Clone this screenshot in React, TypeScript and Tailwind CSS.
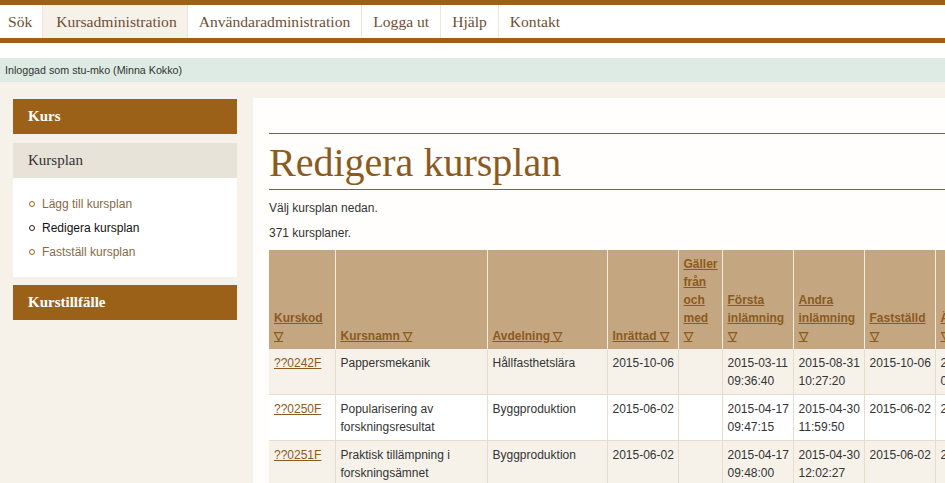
import React from "react";

const navItems = [
  { label: "Sök", active: false },
  { label: "Kursadministration", active: true },
  { label: "Användaradministration", active: false },
  { label: "Logga ut", active: false },
  { label: "Hjälp", active: false },
  { label: "Kontakt", active: false },
];

const columns = [
  { lines: ["Kurskod", "▽"], width: "w-[66px]" },
  { lines: ["Kursnamn ▽"], width: "w-[152px]" },
  { lines: ["Avdelning ▽"], width: "w-[120px]" },
  { lines: ["Inrättad ▽"], width: "w-[71px]" },
  { lines: ["Gäller", "från", "och", "med", "▽"], width: "w-[44px]" },
  { lines: ["Första", "inlämning", "▽"], width: "w-[71px]" },
  { lines: ["Andra", "inlämning", "▽"], width: "w-[71px]" },
  { lines: ["Fastställd", "▽"], width: "w-[71px]" },
  { lines: ["Ändrad", "▽"], width: "w-[80px]" },
];

const rows = [
  {
    code: "??0242F",
    name: ["Pappersmekanik"],
    dept: "Hållfasthetslära",
    created: "2015-10-06",
    valid: "",
    first: ["2015-03-11", "09:36:40"],
    second: ["2015-08-31", "10:27:20"],
    fixed: "2015-10-06",
    changed: ["2015-10-06", "09:51:02"],
  },
  {
    code: "??0250F",
    name: ["Popularisering av", "forskningsresultat"],
    dept: "Byggproduktion",
    created: "2015-06-02",
    valid: "",
    first: ["2015-04-17", "09:47:15"],
    second: ["2015-04-30", "11:59:50"],
    fixed: "2015-06-02",
    changed: ["2015-06-02"],
  },
  {
    code: "??0251F",
    name: ["Praktisk tillämpning i", "forskningsämnet"],
    dept: "Byggproduktion",
    created: "2015-06-02",
    valid: "",
    first: ["2015-04-17", "09:48:00"],
    second: ["2015-04-30", "12:02:27"],
    fixed: "2015-06-02",
    changed: ["2015-06-02"],
  },
];

const Lines = ({ lines }: { lines: string[] }) => (
  <>
    {lines.map((l, i) => (
      <div key={i}>{l}</div>
    ))}
  </>
);

const App = () => {
  const cell =
    "align-top whitespace-nowrap px-[5px] pt-[5px] pb-[4px] border-l border-b border-[#e6ddcd] text-[12px] leading-[18px] text-[#333]";

  return (
    <div className="min-h-screen bg-[#f6f2ea] font-['Liberation_Sans',Arial,sans-serif]">
      {/* top navigation */}
      <div className="bg-white border-t-[5px] border-b-[5px] border-[#9c6118]">
        <ul className="flex h-[33px] font-['Liberation_Serif',Georgia,serif] text-[15.6px] text-[#6e4f33]">
          {navItems.map((item, i) => (
            <li
              key={item.label}
              className={
                "flex items-center " +
                (i > 0 ? "border-l border-[#ece6dc] px-[11px] " : "pl-[8px] pr-[10px] ") +
                (item.active ? "bg-[#f6f2ea] pl-[13px] pr-[10px]" : "")
              }
            >
              {item.label}
            </li>
          ))}
        </ul>
      </div>
      <div className="h-[15px] bg-white" />
      <div className="h-[24px] bg-[#deebe5] flex items-center pl-[5px] text-[10.7px] text-[#333]">
        Inloggad som stu-mko (Minna Kokko)
      </div>

      <div className="flex">
        {/* sidebar */}
        <div className="w-[224px] shrink-0 ml-[13px] mt-[17px]">
          <div className="h-[35px] bg-[#9c6118] flex items-center pl-[15px] font-['Liberation_Serif',Georgia,serif] font-bold text-[15px] text-white">
            Kurs
          </div>
          <div className="mt-[9px] h-[35px] bg-[#e8e3d8] flex items-center pl-[15px] font-['Liberation_Serif',Georgia,serif] text-[15px] text-[#333]">
            Kursplan
          </div>
          <ul className="bg-white pt-[14px] pb-[13px] pl-[16px] text-[12px]">
            {[
              { t: "Lägg till kursplan", active: false },
              { t: "Redigera kursplan", active: true },
              { t: "Fastställ kursplan", active: false },
            ].map((l) => (
              <li
                key={l.t}
                className={
                  "flex items-center h-[24px] " +
                  (l.active ? "text-[#111]" : "text-[#8a6a45]")
                }
              >
                <span
                  className={
                    "inline-block w-[6px] h-[6px] rounded-full border mr-[7px] " +
                    (l.active ? "border-[#222]" : "border-[#9c6118]")
                  }
                />
                {l.t}
              </li>
            ))}
          </ul>
          <div className="mt-[8px] h-[35px] bg-[#9c6118] flex items-center pl-[15px] font-['Liberation_Serif',Georgia,serif] font-bold text-[15px] text-white">
            Kurstillfälle
          </div>
        </div>

        {/* main panel */}
        <div className="flex-1 min-w-0 ml-[16px] mt-[16px] bg-[#fffefc] pl-[16px] overflow-hidden">
          <div className="mt-[35px] border-t border-b border-[#8b5f25] h-[57px] flex items-center">
            <h1 className="font-['Liberation_Serif',Georgia,serif] text-[40px] leading-none text-[#8b5a1f] mt-[2px]">
              Redigera kursplan
            </h1>
          </div>
          <p className="mt-[11px] text-[12px] text-[#333] leading-[14px]">Välj kursplan nedan.</p>
          <p className="mt-[11px] text-[12px] text-[#333] leading-[14px]">371 kursplaner.</p>

          <table className="mt-[10px] table-fixed border-collapse w-[746px]">
            <thead>
              <tr className="bg-[#c4a781]">
                {columns.map((c, i) => (
                  <th
                    key={i}
                    className={
                      c.width +
                      " align-bottom text-left whitespace-nowrap px-[5px] pt-[5px] pb-[4px] border-l border-[#f3ede2] text-[12px] leading-[18px] font-bold text-[#8b5a1f] " +
                      (i === 0 ? "border-l-0" : "")
                    }
                  >
                    <span className="underline">
                      <Lines lines={c.lines} />
                    </span>
                  </th>
                ))}
              </tr>
            </thead>
            <tbody>
              {rows.map((r, i) => (
                <tr key={r.code} className={i % 2 === 0 ? "bg-[#f6f2ea]" : "bg-white"}>
                  <td className={cell + " border-l-0"}>
                    <span className="underline text-[#8b5a1f]">{r.code}</span>
                  </td>
                  <td className={cell}>
                    <Lines lines={r.name} />
                  </td>
                  <td className={cell}>{r.dept}</td>
                  <td className={cell}>{r.created}</td>
                  <td className={cell}>{r.valid}</td>
                  <td className={cell}>
                    <Lines lines={r.first} />
                  </td>
                  <td className={cell}>
                    <Lines lines={r.second} />
                  </td>
                  <td className={cell}>{r.fixed}</td>
                  <td className={cell}>
                    <Lines lines={r.changed} />
                  </td>
                </tr>
              ))}
            </tbody>
          </table>
        </div>
      </div>
    </div>
  );
};

export default App;
